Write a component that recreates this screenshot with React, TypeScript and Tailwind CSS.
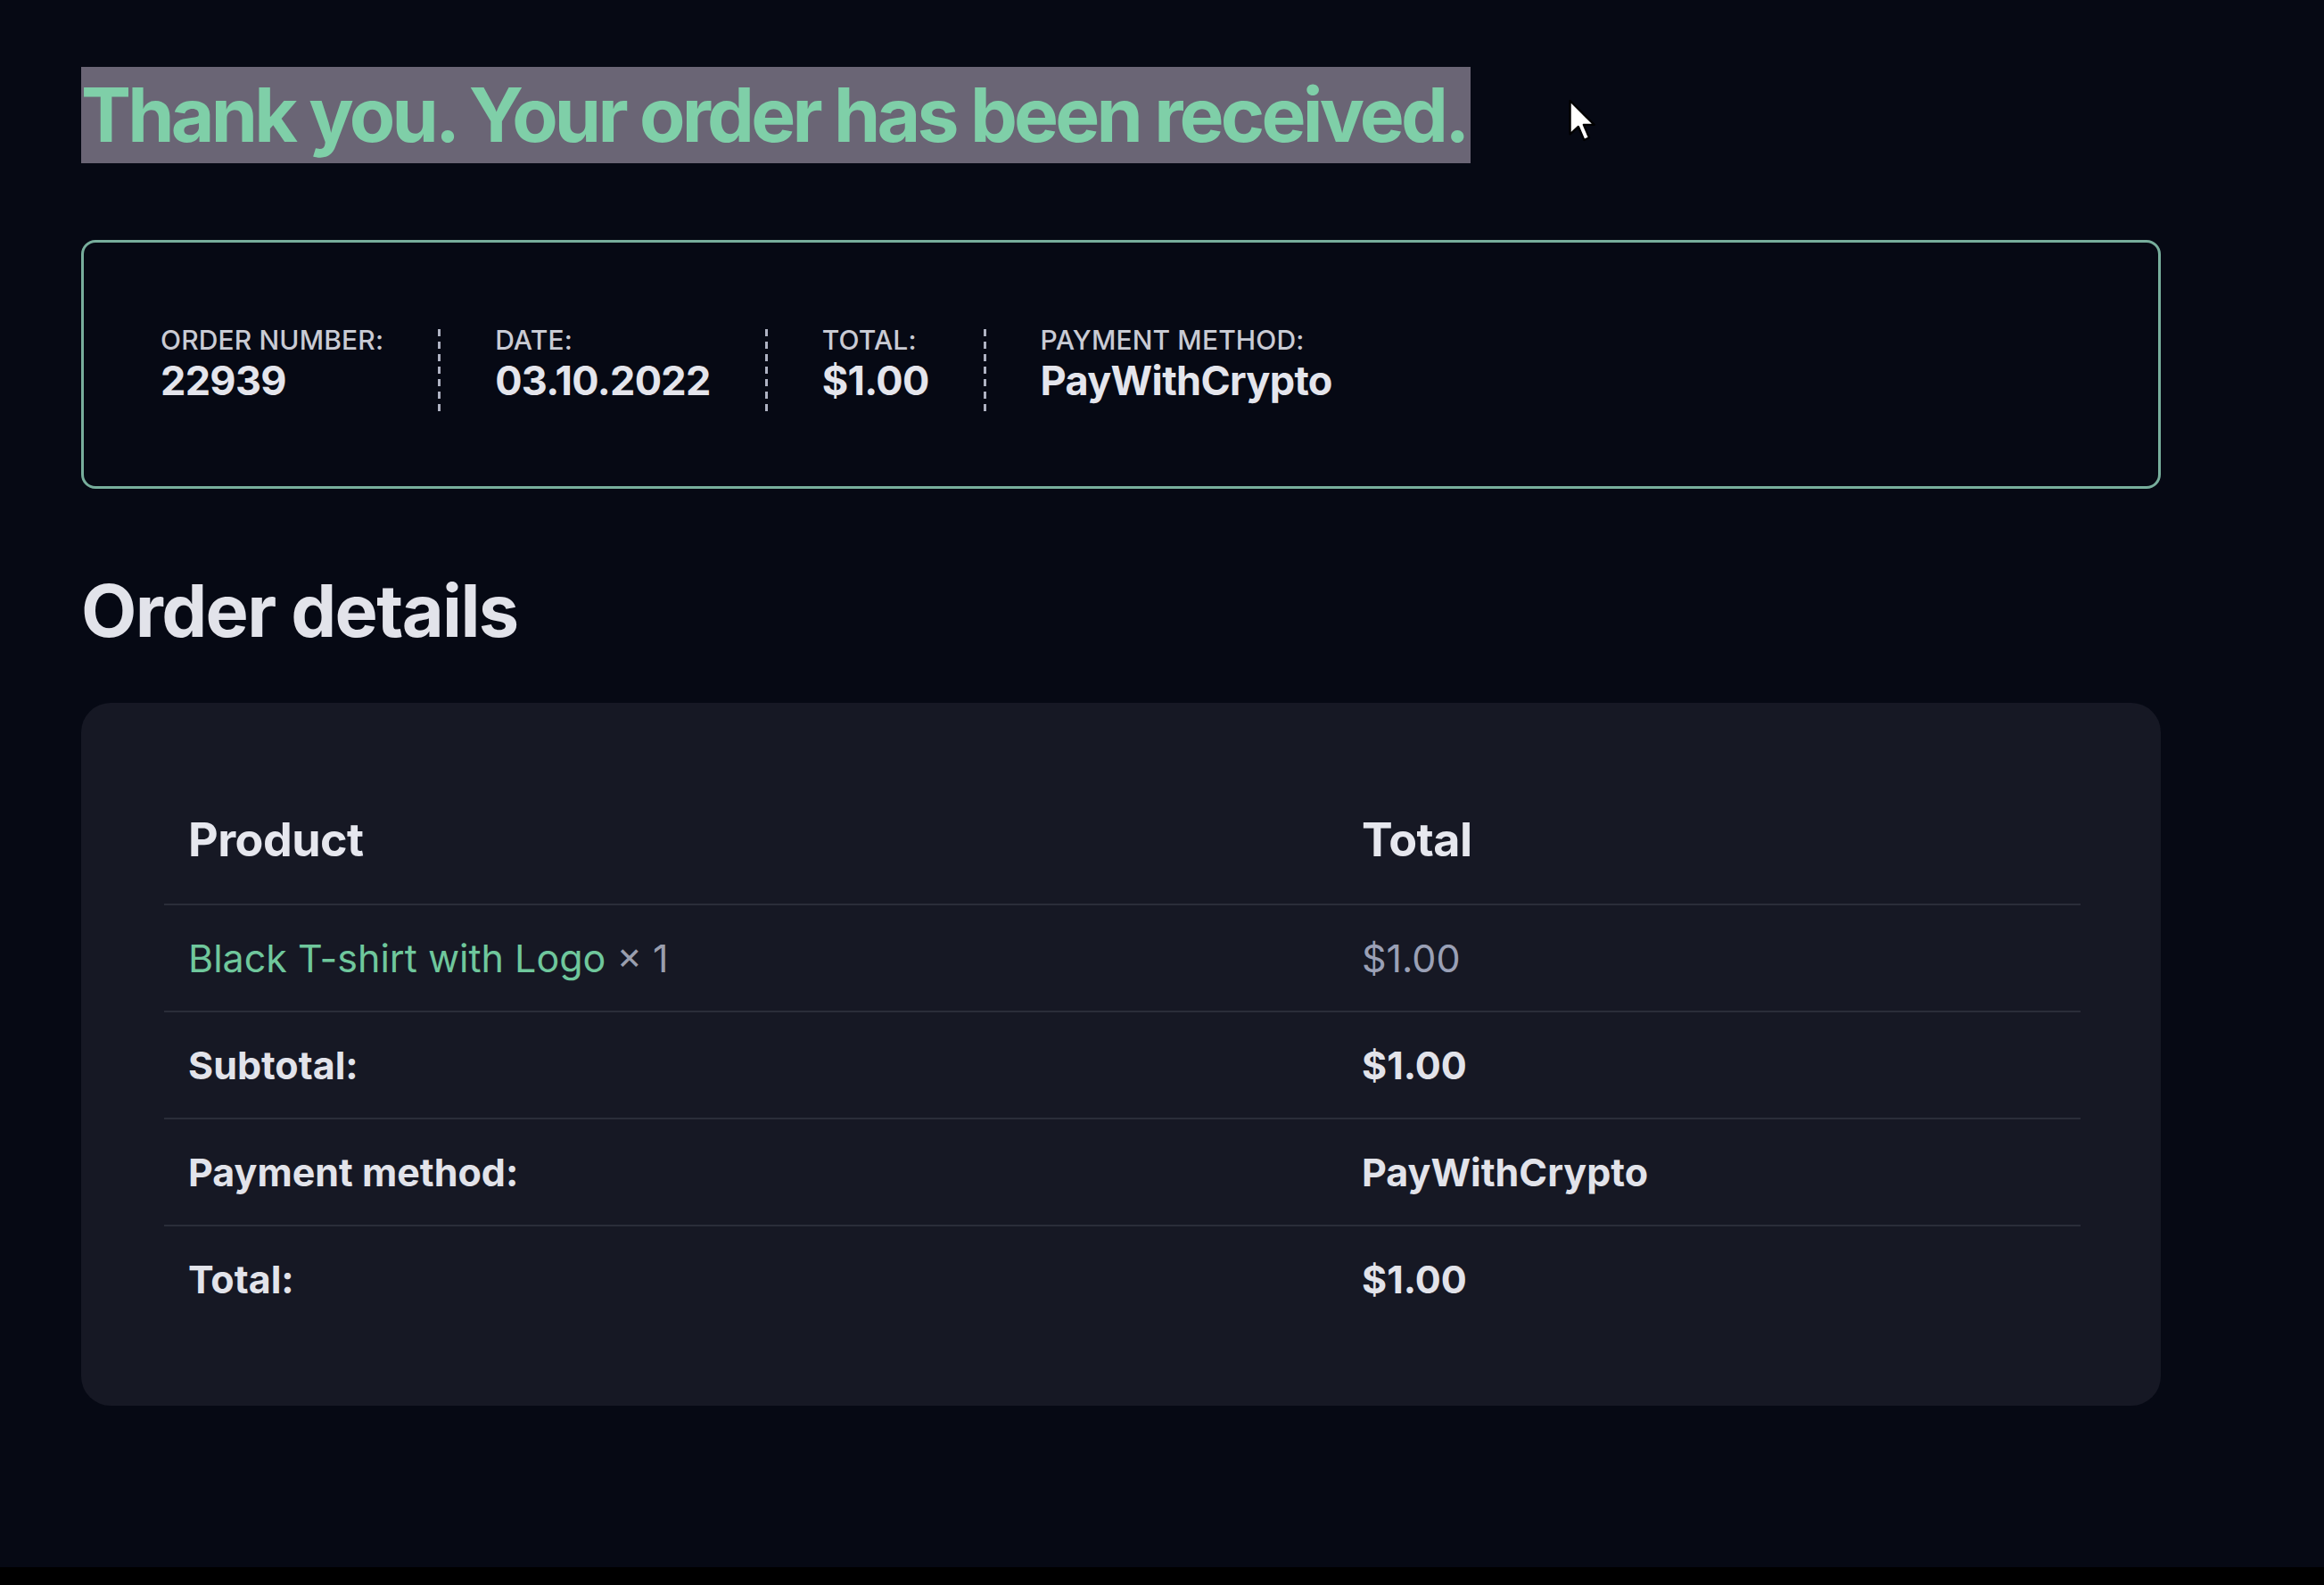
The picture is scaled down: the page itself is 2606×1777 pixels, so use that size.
import React from "react";

const font = { fontFamily: "Inter, 'Liberation Sans', sans-serif" };

function Cursor() {
  return (
    <svg
      className="absolute left-[1758px] top-[110px]"
      width="31"
      height="50"
      viewBox="0 0 12 19"
      aria-hidden
    >
      <path
        d="M1 1 L1 15.5 L4.6 12.2 L7.1 18 L9.3 17 L6.9 11.4 L11.5 11.4 Z"
        fill="#ffffff"
        stroke="#000000"
        strokeWidth="0.9"
        strokeLinejoin="round"
      />
    </svg>
  );
}

function Sep() {
  return (
    <div className="mt-[16px] w-[3px] h-[96px] shrink-0 bg-[repeating-linear-gradient(to_bottom,#aeb2c2_0px,#aeb2c2_8px,transparent_8px,transparent_14px)]" />
  );
}

function Item({ label, value }: { label: string; value: string }) {
  return (
    <div className="flex flex-col">
      <span className="text-[30px] leading-[36px] font-medium uppercase text-[#c9cbd4] tracking-[0.005em]">
        {label}
      </span>
      <span className="text-[45px] leading-[56px] font-bold text-[#e4e5ec] tracking-[-0.015em]">
        {value}
      </span>
    </div>
  );
}

export default function App() {
  return (
    <div
      className="relative min-h-[1777px] w-full bg-[#060914] flex flex-col"
      style={font}
    >
      <Cursor />
      <main className="flex-1 pl-[91px] pt-[75px] w-[2423px]">
        <h1 className="inline-block bg-[#6a6575] text-[#7fcfa8] text-[84px] leading-[108px] font-bold tracking-[-0.045em] pr-[4px]">
          Thank you. Your order has been received.
        </h1>

        <section className="mt-[86px] h-[279px] rounded-[16px] border-[3px] border-[#77ae9c] pl-[86px] flex items-center gap-x-[61px]">
          <Item label="Order number:" value="22939" />
          <Sep />
          <Item label="Date:" value="03.10.2022" />
          <Sep />
          <Item label="Total:" value="$1.00" />
          <Sep />
          <Item label="Payment method:" value="PayWithCrypto" />
        </section>

        <h2 className="mt-[87px] text-[81px] leading-[100px] font-bold text-[#e2e3ea] tracking-[-0.02em]">
          Order details
        </h2>

        <section className="mt-[53px] rounded-[33px] bg-[#161824] pl-[93px] pr-[90px] py-[82px]">
          <table className="w-full border-collapse text-[43px]">
            <thead>
              <tr className="h-[144px] border-b-2 border-[#2a2d39]">
                <th className="w-[1316px] pl-[27px] text-left text-[52px] font-bold text-[#e6e7ee] tracking-[-0.01em]">
                  Product
                </th>
                <th className="pl-[27px] text-left text-[52px] font-bold text-[#e6e7ee] tracking-[-0.01em]">
                  Total
                </th>
              </tr>
            </thead>
            <tbody>
              <tr className="h-[120px] border-b-2 border-[#2a2d39]">
                <td className="pl-[27px]">
                  <span className="text-[#6fc79c]">Black T-shirt with Logo</span>
                  <span className="text-[#9a9eae]"> × 1</span>
                </td>
                <td className="pl-[27px] text-[#9aa0b6]">$1.00</td>
              </tr>
              <tr className="h-[120px] border-b-2 border-[#2a2d39]">
                <th className="pl-[27px] text-left font-bold text-[#e2e3ea]">
                  Subtotal:
                </th>
                <td className="pl-[27px] font-bold text-[#e2e3ea]">$1.00</td>
              </tr>
              <tr className="h-[120px] border-b-2 border-[#2a2d39]">
                <th className="pl-[27px] text-left font-bold text-[#e2e3ea]">
                  Payment method:
                </th>
                <td className="pl-[27px] font-bold text-[#e2e3ea]">
                  PayWithCrypto
                </td>
              </tr>
              <tr className="h-[120px]">
                <th className="pl-[27px] text-left font-bold text-[#e2e3ea]">
                  Total:
                </th>
                <td className="pl-[27px] font-bold text-[#e2e3ea]">$1.00</td>
              </tr>
            </tbody>
          </table>
        </section>
      </main>
      <div className="h-[20px] bg-black" />
    </div>
  );
}
